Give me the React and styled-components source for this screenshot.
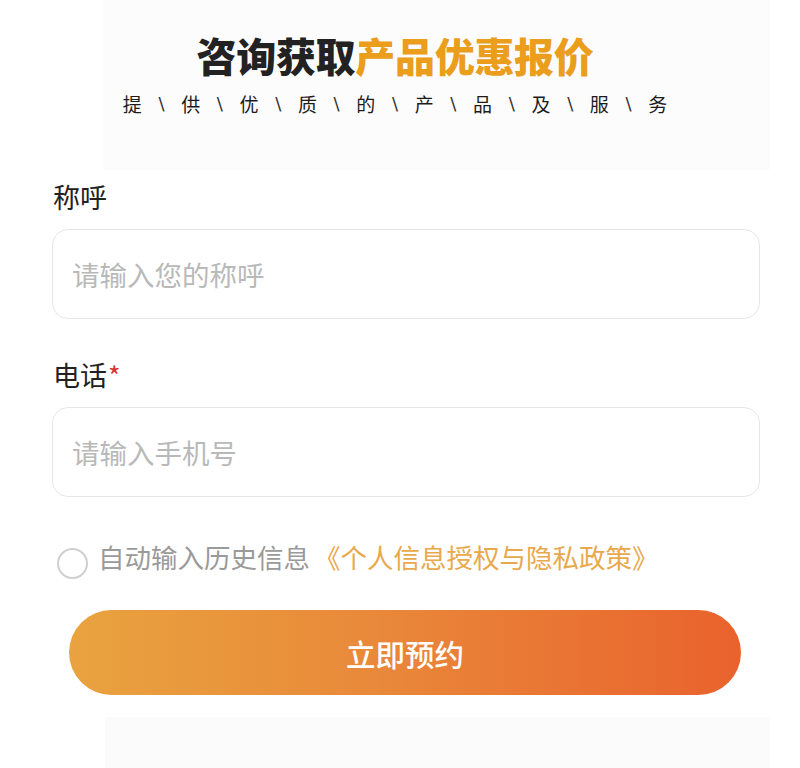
import React from "react";
import styled, { createGlobalStyle } from "styled-components";

const Global = createGlobalStyle`
  html, body { margin: 0; padding: 0; background: #ffffff; }
  body { font-family: "Noto Sans CJK SC", "Noto Sans", sans-serif; }
  * { box-sizing: border-box; }
`;

const Page = styled.div`
  width: 800px;
  min-height: 768px;
  background: #ffffff;
  overflow: hidden;
`;

const Header = styled.header`
  margin: 0 30px 0 103px;
  padding: 31px 83px 0 0;
  height: 170px;
  background: #fcfcfc;
  display: flex;
  flex-direction: column;
  align-items: center;
`;

const Title = styled.h1`
  margin: 0;
  font-size: 40px;
  line-height: 48px;
  font-weight: 900;
  color: #222222;
  letter-spacing: -0.3px;
  white-space: nowrap;
`;

const Accent = styled.span`
  color: #eb9d1c;
`;

const Slogan = styled.div`
  margin-top: 13px;
  display: flex;
  align-items: center;
  gap: 10px;
  height: 24px;
  font-size: 19px;
  line-height: 24px;
  color: #1c1c1c;
  white-space: nowrap;
`;

const Char = styled.span`
  width: 19px;
  text-align: center;
`;

const Sep = styled.span`
  width: 19.4px;
  text-align: center;
  font-family: "DejaVu Sans", sans-serif;
  font-size: 18px;
  color: #333;
`;

const Form = styled.form`
  margin-top: 11px;
  padding: 0 40px 0 52px;
  display: flex;
  flex-direction: column;
`;

const Label = styled.label`
  display: flex;
  align-items: center;
  height: 32px;
  font-size: 27px;
  line-height: 32px;
  color: #222;
  margin-top: ${(p) => p.$top || 0}px;
  padding-left: 1px;
`;

const Star = styled.span`
  color: #d8352f;
  font-size: 27px;
  margin-left: 1px;
  position: relative;
  top: 1px;
`;

const Input = styled.input`
  margin-top: 16px;
  width: 100%;
  height: 90px;
  border: 1.5px solid #e6e6e6;
  border-radius: 16px;
  background: #fff;
  padding: 0 19px;
  font-family: "Noto Sans CJK SC", sans-serif;
  font-size: 27.5px;
  color: #333;
  outline: none;
  &::placeholder { color: #b9b9b9; }
`;

const AgreeRow = styled.div`
  margin-top: 43px;
  display: flex;
  align-items: center;
  height: 32px;
  padding-left: 5px;
  font-size: 26.5px;
  color: #9a9a9a;
  white-space: nowrap;
`;

const Radio = styled.span`
  width: 31px;
  height: 31px;
  border-radius: 50%;
  border: 2px solid #cfcfcf;
  margin-top: 14px;
  margin-right: 10px;
  flex-shrink: 0;
`;

const Policy = styled.span`
  color: #e9a84c;
  margin-left: 4px;
  font-size: 26.5px;
`;

const Submit = styled.button`
  margin: 38px 19px 0 17px;
  height: 85px;
  border: none;
  border-radius: 43px;
  background: linear-gradient(90deg, #e9a33f 0%, #e9893a 45%, #e9622d 100%);
  color: #fff;
  font-family: "Noto Sans CJK SC", sans-serif;
  font-size: 29.5px;
  font-weight: 500;
  cursor: pointer;
`;

const BottomShade = styled.div`
  height: 60px;
  margin: 22px 30px 0 105px;
  background: #fbfbfb;
`;

const slogan = ["提", "供", "优", "质", "的", "产", "品", "及", "服", "务"];

export default function App() {
  return (
    <Page>
      <Global />
      <Header>
        <Title>
          咨询获取<Accent>产品优惠报价</Accent>
        </Title>
        <Slogan>
          {slogan.map((c, i) => (
            <React.Fragment key={i}>
              {i > 0 && <Sep>\</Sep>}
              <Char>{c}</Char>
            </React.Fragment>
          ))}
        </Slogan>
      </Header>
      <Form onSubmit={(e) => e.preventDefault()}>
        <Label>称呼</Label>
        <Input placeholder="请输入您的称呼" />
        <Label $top={40}>
          电话<Star>*</Star>
        </Label>
        <Input placeholder="请输入手机号" />
        <AgreeRow>
          <Radio />
          自动输入历史信息
          <Policy>《个人信息授权与隐私政策》</Policy>
        </AgreeRow>
        <Submit type="submit">立即预约</Submit>
      </Form>
      <BottomShade />
    </Page>
  );
}
